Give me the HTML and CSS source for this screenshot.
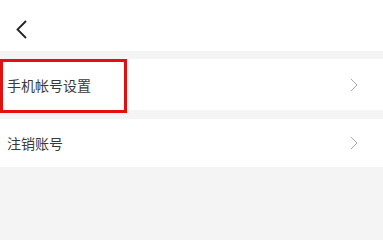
FILE: index.html
```html
<!DOCTYPE html>
<html lang="zh">
<head>
<meta charset="utf-8">
<link rel="stylesheet" href="styles.css">
</head>
<body>
<header class="topbar">
  <svg class="back" width="11" height="19" viewBox="0 0 11 19"><polyline points="10,1 1.5,9.5 10,18" fill="none" stroke="#222" stroke-width="1.8"/></svg>
</header>
<main class="list">
  <div class="row row-first">
    <span class="label">手机帐号设置</span>
    <svg class="chev" width="8" height="14" viewBox="0 0 8 14"><polyline points="1,1 7,7 1,13" fill="none" stroke="#a8a8a8" stroke-width="1"/></svg>
    <div class="highlight"></div>
  </div>
  <div class="row row-second">
    <span class="label">注销账号</span>
    <svg class="chev" width="8" height="14" viewBox="0 0 8 14"><polyline points="1,1 7,7 1,13" fill="none" stroke="#a8a8a8" stroke-width="1"/></svg>
  </div>
</main>
</body>
</html>
```
FILE: styles.css
```css
html, body {
  margin: 0;
  padding: 0;
}
body {
  background: #f4f4f4;
  font-family: "Noto Sans CJK SC", "Noto Sans", sans-serif;
  width: 383px;
  height: 230px;
  overflow: hidden;
}
.topbar {
  height: 51px;
  background: #fff;
  display: flex;
  align-items: flex-start;
  padding: 20px 0 0 16px;
  box-sizing: border-box;
}
.back {
  display: block;
}
.list {
  display: flex;
  flex-direction: column;
  gap: 9px;
  padding-top: 8px;
}
.row {
  position: relative;
  background: #fff;
  display: flex;
  align-items: center;
  justify-content: space-between;
  padding: 0 25px 0 7px;
}
.row-first { height: 51px; }
.row-second { height: 48px; }
.label {
  font-size: 14px;
  color: #3a3a3a;
  line-height: 1;
}
.chev { display: block; }
.highlight {
  position: absolute;
  left: 0;
  top: 0;
  width: 127px;
  height: 54px;
  border: 3px solid #e41010;
  box-sizing: border-box;
}
```
